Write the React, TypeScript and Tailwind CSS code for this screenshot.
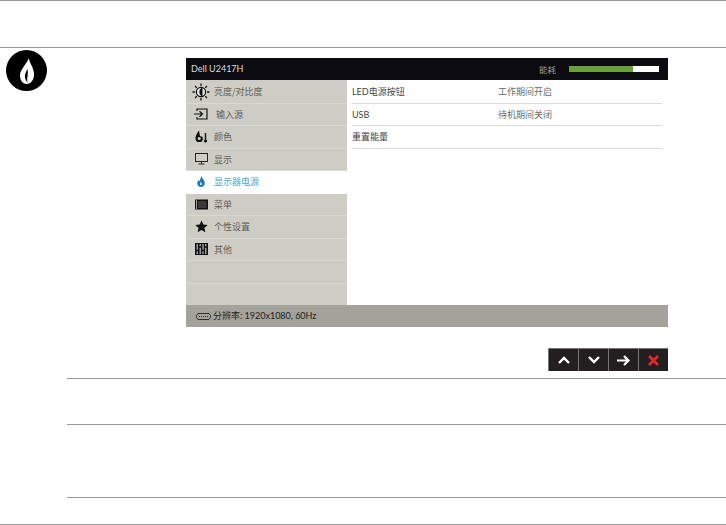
import type { ReactNode } from 'react';

const cjk = '"Noto Sans CJK SC", sans-serif';
const mixed = '"Lato", "Noto Sans CJK SC", sans-serif';

function SunIcon() {
  return (
    <svg width="18" height="18" viewBox="0 0 18 18">
      <circle cx="9" cy="9" r="4.6" fill="#e8e8e2" stroke="#111" strokeWidth="1.2" />
      <path d="M10.500 4.500a4.800 4.800 0 0 0 0 9z" fill="#111" />
      <path
        d="M9 0.500v2.400M9 15.100v2.400M0.500 9h2.400M15.100 9h2.400M3 3l1.700 1.700M13.300 13.300l1.700 1.700M3 15l1.700-1.700M13.300 4.700L15 3"
        stroke="#111"
        strokeWidth="1.300"
      />
    </svg>
  );
}

function InputIcon() {
  return (
    <svg width="14" height="12" viewBox="0 0 14 12" fill="none" stroke="#111" strokeWidth="1.200">
      <path d="M3 3V1h10v10H3V9" />
      <path d="M0 6h8M5.500 3.200L8.500 6l-3 2.800" />
    </svg>
  );
}

function ColorIcon() {
  return (
    <svg width="13" height="13" viewBox="0 0 13 13">
      <path d="M4 0.500C2 3.500 0.500 5.500 0.500 8.400a3.700 3.700 0 0 0 7.400 0C7.900 6.800 6.800 6 5 6.200 4.600 4.500 4.400 2.500 4 0.500z" fill="#111" />
      <circle cx="4.200" cy="8.600" r="1.500" fill="#cdcdc5" />
      <path d="M10.500 3v7" stroke="#111" strokeWidth="1.400" />
      <circle cx="10.500" cy="11" r="1.600" fill="#111" />
    </svg>
  );
}

function MonitorIcon() {
  return (
    <svg width="13" height="12" viewBox="0 0 13 12" fill="none" stroke="#222" strokeWidth="1">
      <rect x="0.500" y="0.500" width="12" height="8" />
      <path d="M6.500 8.500v2M3.500 11h6" />
    </svg>
  );
}

function SmallFlame() {
  return (
    <svg width="8" height="11" viewBox="0 0 8 11">
      <path d="M4.600 0C4.800 2.400 7.700 4 7.700 7.200 7.700 9.500 6 11 4 11 2 11 0.300 9.500 0.300 7.400 0.300 5.800 1.300 4.800 1.800 3.800 2 4.600 2.400 5 2.900 5.200 3 3.400 3.800 1.600 4.600 0z" fill="#1679b8" />
      <path d="M3.800 5.800C3.200 7 3 8 3.400 8.800 3.700 9.300 4.500 9.300 4.800 8.800 5.100 8 4.300 7 3.800 5.800z" fill="#fff" />
    </svg>
  );
}

function MenuIcon() {
  return (
    <svg width="13" height="11" viewBox="0 0 13 11">
      <rect x="0" y="0.500" width="13" height="10" fill="#111" />
      <rect x="3" y="2" width="8.500" height="7" fill="#3a3a3a" />
      <path d="M1.500 1v9" stroke="#cdcdc5" strokeWidth="0.800" />
    </svg>
  );
}

function StarIcon() {
  return (
    <svg width="13" height="13" viewBox="0 0 13 13">
      <path d="M6.500 0.500l1.800 4.100 4.400 0.400-3.300 2.900 1 4.400-3.900-2.300-3.900 2.300 1-4.400L0.300 5l4.400-0.400z" fill="#111" />
    </svg>
  );
}

function OthersIcon() {
  return (
    <svg width="13" height="12" viewBox="0 0 13 12">
      <rect x="0" y="0" width="13" height="12" fill="#111" />
      <path d="M2.200 1v10M5.200 1v10M8 1v10M10.800 1v10" stroke="#ddd" strokeWidth="1" />
      <path d="M1 7.500h2.400M4 4h2.400M6.800 7.500h2.400M9.600 4H12" stroke="#111" strokeWidth="1.400" />
    </svg>
  );
}

function PortIcon() {
  return (
    <svg width="15" height="7" viewBox="0 0 15 7" fill="none" stroke="#222" strokeWidth="0.900">
      <path d="M2 0.500h11l1.500 2v2L13 6.500H2L0.500 4.500v-2z" />
      <path d="M3 3.500h9" strokeDasharray="1 1" />
    </svg>
  );
}

function MenuRow({ icon, label, active, nudge }: { icon?: ReactNode; label?: string; active?: boolean; nudge?: boolean }) {
  return (
    <div className={`h-[22.5px] flex items-center border-b ${active ? 'bg-white border-white text-[#45a7d0]' : 'border-[#d9d9d2] text-[#5f5f59]'}`}>
      <div className="w-[30px] flex justify-center shrink-0">{icon}</div>
      <span className={`text-[9px] ${nudge ? 'ml-0' : 'ml-[-2px]'}`} style={{ fontFamily: cjk }}>{label}</span>
    </div>
  );
}

function SettingRow({ left, right }: { left: string; right?: string }) {
  return (
    <div className="h-[22.5px] flex items-center border-b border-[#dcdcdc] text-[9px] text-[#444]">
      <span className="w-[146px]" style={{ fontFamily: mixed }}>{left}</span>
      {right && <span className="text-[#6a6a6a]" style={{ fontFamily: cjk }}>{right}</span>}
    </div>
  );
}

function NavButton({ children }: { children: ReactNode }) {
  return <div className="w-[30px] h-full flex items-center justify-center bg-[#231f20] border-l border-[#77777a]">{children}</div>;
}

export default function App() {
  return (
    <div className="w-[726px] h-[525px] bg-white overflow-hidden" style={{ fontFamily: '"Lato", sans-serif' }}>
      <div className="h-[47px] border-t border-[#999]" />

      <div className="h-[331px] border-t border-[#999] flex">
        <div className="w-[67px] shrink-0 pl-[6px] pt-[2px]">
          <div className="w-[41px] h-[41px] rounded-full bg-black flex items-center justify-center">
            <svg width="14" height="26" viewBox="0 0 14 26">
              <path d="M9 0C9 5 14 9 14 16.500 14 22 10.500 26 7 26 3 26 0 22.500 0 17.500 0 11.500 6 7 9 0z" fill="#fff" />
              <path d="M7.500 11C5.500 14.500 4.500 17 5 19.500 5.400 21.500 6.500 23 7.500 25 7.200 22 7 20.500 7.500 18.500 8 16 7.800 13.500 7.500 11z" fill="#000" />
            </svg>
          </div>
        </div>

        <div className="pl-[119px] pt-[10px]">
          <div className="w-[482px] h-[269px] flex flex-col">
            <div className="h-[22px] bg-[#0c0c10] flex items-center justify-between pl-[5px] pr-[9px]">
              <span className="text-[9px] text-[#ddd]">Dell U2417H</span>
              <div className="flex items-center gap-[13px]">
                <span className="text-[8.5px] text-[#999]" style={{ fontFamily: cjk }}>能耗</span>
                <div className="w-[90px] h-[6px] bg-white">
                  <div className="w-[64px] h-full bg-[#6b9e3c]" />
                </div>
              </div>
            </div>

            <div className="flex-1 flex">
              <div className="w-[161px] bg-[#cdcdc5] pt-px">
                <MenuRow icon={<SunIcon />} label="亮度/对比度" />
                <MenuRow icon={<InputIcon />} label="输入源" nudge />
                <MenuRow icon={<ColorIcon />} label="颜色" />
                <MenuRow icon={<MonitorIcon />} label="显示" />
                <MenuRow icon={<SmallFlame />} label="显示器电源" active />
                <MenuRow icon={<MenuIcon />} label="菜单" />
                <MenuRow icon={<StarIcon />} label="个性设置" />
                <MenuRow icon={<OthersIcon />} label="其他" />
                <MenuRow />
              </div>
              <div className="flex-1 bg-white pl-[5px] pr-[6px] pt-px">
                <SettingRow left="LED电源按钮" right="工作期间开启" />
                <SettingRow left="USB" right="待机期间关闭" />
                <SettingRow left="重置能量" />
              </div>
            </div>

            <div className="h-[22px] bg-[#a3a39b] flex items-center pl-[10px] gap-[2px] text-[9px] text-[#222]">
              <PortIcon />
              <span style={{ fontFamily: mixed }}>分辨率: 1920x1080, 60Hz</span>
            </div>
          </div>

          <div className="w-[482px] flex justify-end mt-[21px]">
            <div className="h-[23px] flex border-t border-[#77777a]">
              <NavButton>
                <svg width="12" height="8" viewBox="0 0 12 8" fill="none" stroke="#fff" strokeWidth="2.400"><path d="M1 7l5-5 5 5" /></svg>
              </NavButton>
              <NavButton>
                <svg width="12" height="8" viewBox="0 0 12 8" fill="none" stroke="#fff" strokeWidth="2.400"><path d="M1 1l5 5 5-5" /></svg>
              </NavButton>
              <NavButton>
                <svg width="13" height="11" viewBox="0 0 13 11" fill="none" stroke="#fff" strokeWidth="2.200"><path d="M0 5.500h11M7 1l4.500 4.500L7 10" /></svg>
              </NavButton>
              <NavButton>
                <svg width="11" height="11" viewBox="0 0 11 11" fill="none" stroke="#e12b2b" strokeWidth="2.800"><path d="M1 1l9 9M10 1l-9 9" /></svg>
              </NavButton>
            </div>
          </div>
        </div>
      </div>

      <div className="ml-[67px] h-[46px] border-t border-[#999]" />
      <div className="ml-[67px] h-[73px] border-t border-[#999]" />
      <div className="ml-[67px] h-[27px] border-t border-[#999]" />
      <div className="h-px bg-[#999]" />
    </div>
  );
}
